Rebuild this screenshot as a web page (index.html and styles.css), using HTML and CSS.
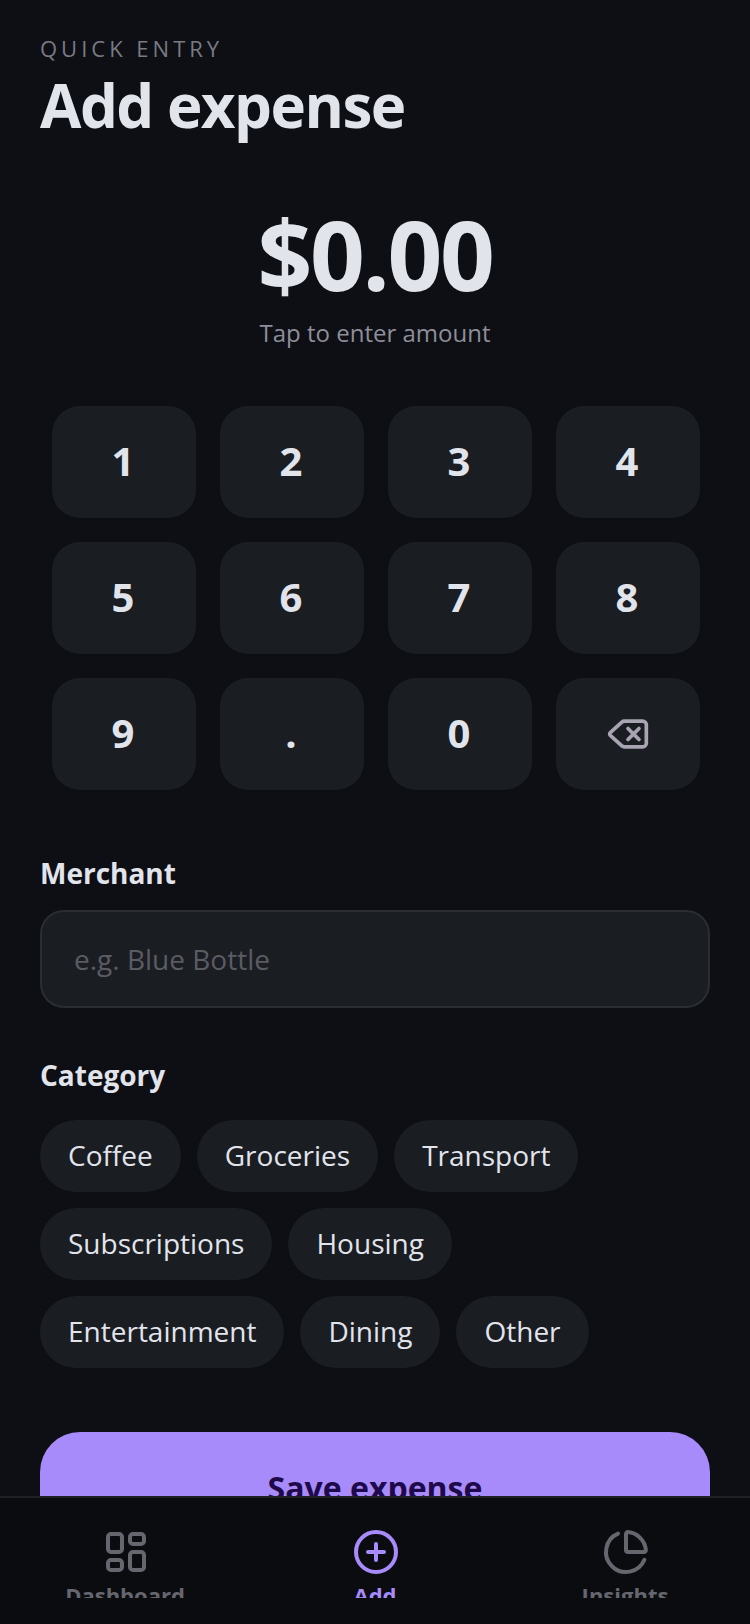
FILE: index.html
```html
<!DOCTYPE html>
<html lang="en">

<head>
     <meta charset="UTF-8" />
     <title>Add expense</title>
     <meta name="viewport" content="width=device-width, initial-scale=1" />
     <link rel="stylesheet" href="styles.css">
</head>

<body>
     <main class="page">
          <p class="eyebrow">QUICK ENTRY</p>
          <h1 class="title">Add expense</h1>

          <div class="amount">
               <div class="amount-value">$0.00</div>
               <div class="amount-hint">Tap to enter amount</div>
          </div>

          <div class="keypad">
               <button class="key">1</button>
               <button class="key">2</button>
               <button class="key">3</button>
               <button class="key">4</button>
               <button class="key">5</button>
               <button class="key">6</button>
               <button class="key">7</button>
               <button class="key">8</button>
               <button class="key">9</button>
               <button class="key">.</button>
               <button class="key">0</button>
               <button class="key key-delete" aria-label="Delete">
                    <svg class="key-icon" viewBox="0 0 24 24">
                         <path d="M10 5a2 2 0 0 0-1.344.519l-6.328 5.74a1 1 0 0 0 0 1.481l6.328 5.741A2 2 0 0 0 10 19h10a2 2 0 0 0 2-2V7a2 2 0 0 0-2-2z" />
                         <path d="m12 9 6 6" />
                         <path d="m18 9-6 6" />
                    </svg>
               </button>
          </div>

          <label class="field-label" for="merchant">Merchant</label>
          <input class="field-input" id="merchant" type="text" placeholder="e.g. Blue Bottle" />

          <div class="field-label category-label">Category</div>
          <div class="chips">
               <span class="chip">Coffee</span>
               <span class="chip">Groceries</span>
               <span class="chip">Transport</span>
               <span class="chip">Subscriptions</span>
               <span class="chip">Housing</span>
               <span class="chip">Entertainment</span>
               <span class="chip">Dining</span>
               <span class="chip">Other</span>
          </div>

          <button class="save">Save expense</button>
     </main>

     <nav class="tabs">
          <a class="tab">
               <svg class="tab-icon" viewBox="0 0 24 24">
                    <rect x="3" y="3" width="7" height="9" rx="1.5" />
                    <rect x="14" y="3" width="7" height="5" rx="1.5" />
                    <rect x="14" y="12" width="7" height="9" rx="1.5" />
                    <rect x="3" y="16" width="7" height="5" rx="1.5" />
               </svg>
               <span class="tab-label">Dashboard</span>
          </a>
          <a class="tab active">
               <svg class="tab-icon" viewBox="0 0 24 24">
                    <circle cx="12" cy="12" r="10" />
                    <path d="M8 12h8" />
                    <path d="M12 8v8" />
               </svg>
               <span class="tab-label">Add</span>
          </a>
          <a class="tab">
               <svg class="tab-icon" viewBox="0 0 24 24">
                    <path d="M21 12c.552 0 1.005-.449.95-.998a10 10 0 0 0-8.953-8.951c-.55-.055-.998.398-.998.95v8a1 1 0 0 0 1 1z" />
                    <path d="M21.21 15.89A10 10 0 1 1 8 2.83" />
               </svg>
               <span class="tab-label">Insights</span>
          </a>
     </nav>
</body>

</html>
```
FILE: styles.css
```css
* {
     box-sizing: border-box;
     margin: 0;
     padding: 0;
}

html,
body {
     height: 100%;
}

body {
     display: flex;
     flex-direction: column;
     height: 1624px;
     overflow: hidden;
     font-family: "Open Sans", "Noto Sans", sans-serif;
     background: #0d0f14;
     color: #e2e4ec;
}

.page {
     flex: 1;
     min-height: 0;
     overflow: hidden;
     padding: 32px 40px 0;
}

.eyebrow {
     font-size: 22px;
     line-height: 32px;
     letter-spacing: 4px;
     color: #7a7a84;
}

.title {
     margin-top: 5px;
     font-size: 60px;
     line-height: 72px;
     font-weight: 700;
     letter-spacing: -1.5px;
}

.amount {
     margin-top: 55px;
     text-align: center;
}

.amount-value {
     font-size: 96px;
     line-height: 116px;
     font-weight: 700;
     letter-spacing: -2.4px;
}

.amount-hint {
     margin-top: 5px;
     font-size: 24px;
     line-height: 32px;
     color: #8e8e9a;
}

.keypad {
     display: grid;
     grid-template-columns: repeat(4, 144px);
     gap: 24px;
     margin-top: 57px;
     padding-left: 12px;
}

.key {
     display: flex;
     align-items: center;
     justify-content: center;
     height: 112px;
     padding: 0 2px 4px 0;
     border: none;
     border-radius: 28px;
     background: #1a1d22;
     color: #e2e4ec;
     font-family: inherit;
     font-size: 40px;
     font-weight: 700;
}

.key-delete {
     padding: 0;
}

.key-icon {
     width: 44px;
     height: 44px;
     fill: none;
     stroke: #a8a4b2;
     stroke-width: 2;
     stroke-linecap: round;
     stroke-linejoin: round;
}

.field-label {
     display: block;
     margin-top: 64px;
     font-size: 28px;
     line-height: 38px;
     font-weight: 700;
}

.field-input {
     display: block;
     width: 100%;
     height: 98px;
     margin-top: 18px;
     padding: 0 32px;
     border: 2px solid #2a2d33;
     border-radius: 24px;
     background: #1a1d22;
     color: #e2e4ec;
     font-family: inherit;
     font-size: 28px;
}

.field-input::placeholder {
     color: #5a5b63;
}

.category-label {
     margin-top: 48px;
}

.chips {
     display: flex;
     flex-wrap: wrap;
     gap: 16px;
     margin-top: 26px;
}

.chip {
     display: flex;
     align-items: center;
     height: 72px;
     padding: 0 28px 2px;
     border-radius: 36px;
     background: #1a1d22;
     font-size: 28px;
}

.save {
     display: block;
     width: 100%;
     height: 110px;
     margin-top: 64px;
     border: none;
     border-radius: 40px;
     background: #a78bfa;
     color: #1e0a4a;
     font-family: inherit;
     font-size: 32px;
     font-weight: 700;
}

.tabs {
     display: flex;
     flex: none;
     height: 128px;
     padding: 30px 0 26px;
     border-top: 2px solid #1e2025;
     background: #0a0c10;
}

.tab {
     display: flex;
     flex: 1;
     flex-direction: column;
     align-items: center;
     overflow: hidden;
     color: #66666f;
}

.tab.active {
     color: #a78bfa;
}

.tab-icon {
     flex: none;
     width: 48px;
     height: 48px;
     margin-left: 2px;
     fill: none;
     stroke: currentColor;
     stroke-width: 2;
     stroke-linecap: round;
     stroke-linejoin: round;
}

.tab-label {
     margin-top: 4px;
     font-size: 22px;
     line-height: 30px;
     font-weight: 700;
}
```
